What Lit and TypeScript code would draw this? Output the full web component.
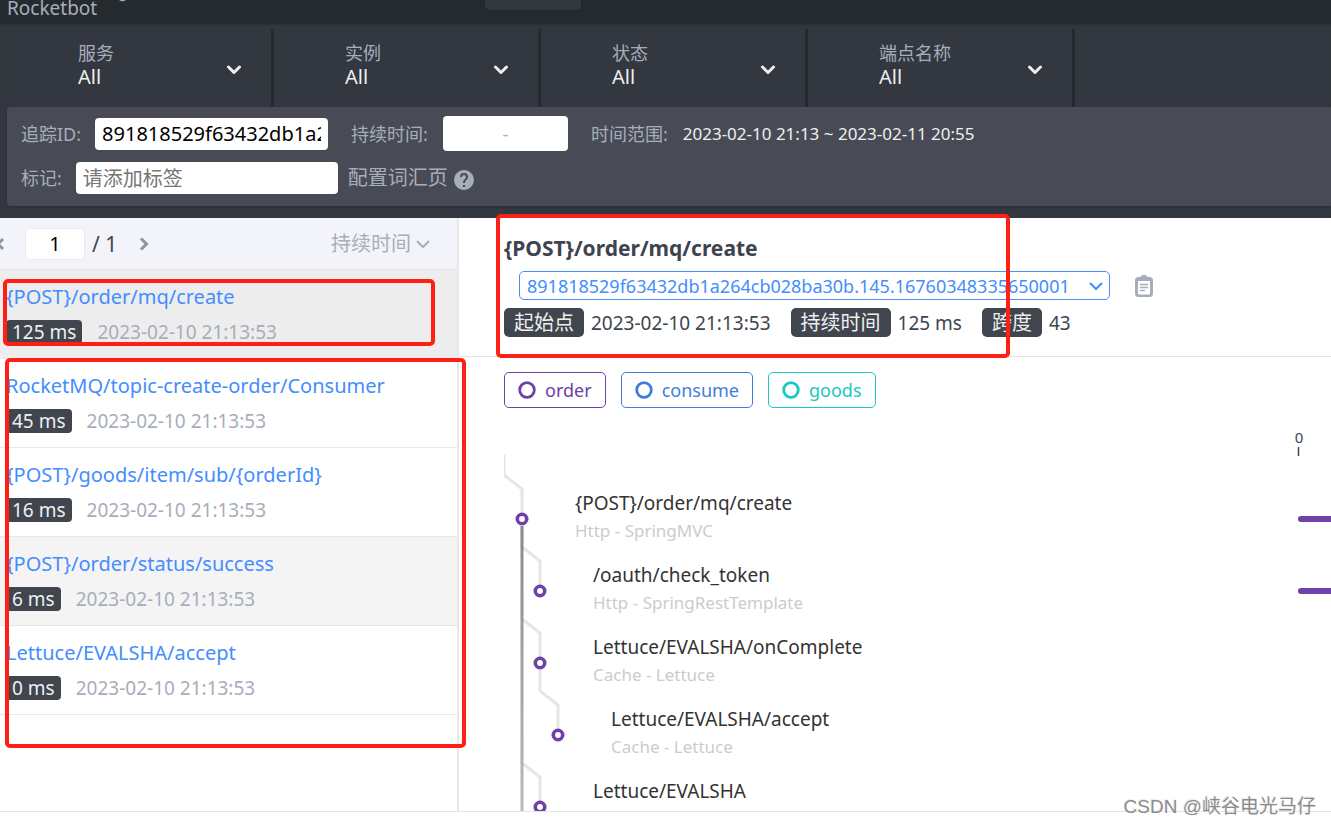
import { LitElement, html, svg, css, nothing } from "lit";
import { customElement, state } from "lit/decorators.js";
import { classMap } from "lit/directives/class-map.js";

interface TraceItem {
  name: string;
  duration: string;
  tone: "" | "selected" | "hovered";
}

interface Span {
  label: string;
  layer: string;
  depth: number;
  bar: boolean;
}

const STARTED = "2023-02-10 21:13:53";
const TRACE_ID = "891818529f63432db1a264cb028ba30b.145.16760348335650001";

const FILTERS = ["服务", "实例", "状态", "端点名称"];

const TRACES: TraceItem[] = [
  { name: "{POST}/order/mq/create", duration: "125 ms", tone: "selected" },
  { name: "RocketMQ/topic-create-order/Consumer", duration: "45 ms", tone: "" },
  { name: "{POST}/goods/item/sub/{orderId}", duration: "16 ms", tone: "" },
  { name: "{POST}/order/status/success", duration: "6 ms", tone: "hovered" },
  { name: "Lettuce/EVALSHA/accept", duration: "0 ms", tone: "" },
];

const SERVICES = [
  { name: "order", color: "#6e40aa" },
  { name: "consume", color: "#417de0" },
  { name: "goods", color: "#1ac7c2" },
];

const SPANS: Span[] = [
  { label: "{POST}/order/mq/create", layer: "Http - SpringMVC", depth: 0, bar: true },
  { label: "/oauth/check_token", layer: "Http - SpringRestTemplate", depth: 1, bar: true },
  { label: "Lettuce/EVALSHA/onComplete", layer: "Cache - Lettuce", depth: 1, bar: false },
  { label: "Lettuce/EVALSHA/accept", layer: "Cache - Lettuce", depth: 2, bar: false },
  { label: "Lettuce/EVALSHA", layer: "Cache - Lettuce", depth: 1, bar: false },
];

const BASE = css`
  :host {
    font-family: "Noto Sans", "Noto Sans CJK SC", sans-serif;
    font-size: 19px;
    line-height: 24px;
  }
  *,
  *::before,
  *::after {
    box-sizing: border-box;
  }
  input,
  select,
  button {
    font: inherit;
    color: inherit;
    margin: 0;
    padding: 0;
    border: 0;
    background: none;
    outline: none;
  }
  select {
    appearance: none;
    cursor: pointer;
  }
  svg {
    display: block;
    flex: none;
  }
`;

const chevronDown = () => html`
  <svg width="16" height="10" viewBox="0 0 16 10" fill="none" stroke="currentColor"
    stroke-width="2" aria-hidden="true">
    <path d="M2 2 L8 8 L14 2" />
  </svg>
`;

@customElement("trace-filters")
export class TraceFilters extends LitElement {
  static styles = [
    BASE,
    css`
      :host {
        display: block;
        padding: 5px 0 12px 7px;
        background: #333840;
        box-shadow: inset 0 2px 2px -1px #2b3036;
      }
      .filters {
        display: flex;
      }
      .filter {
        display: grid;
        grid-template-columns: 1fr 16px;
        align-items: center;
        align-content: start;
        flex: 0 1 267px;
        height: 78px;
        padding: 12px 29px 0 71px;
        border-right: 3px solid #252a2f;
      }
      .name {
        grid-column: 1;
        font-size: 18px;
        color: #a7aebb;
      }
      .value {
        grid-area: 2 / 1 / 3 / 3;
        height: 24px;
        font-size: 20px;
        color: #efefef;
      }
      .arrow {
        grid-area: 1 / 2 / 3 / 3;
        color: #efefef;
        pointer-events: none;
        margin-top: 10px;
      }
      .panel {
        padding: 9px 14px 12px;
        background: #484b55;
        border-radius: 4px 0 0 4px;
        box-shadow: 0 1px 3px #2a2e34;
        color: #a7aebb;
      }
      .row {
        display: flex;
        align-items: center;
        font-size: 18px;
      }
      .row + .row {
        margin-top: 11px;
      }
      .row label {
        margin-right: 14px;
      }
      .caption {
        margin-right: 15px;
      }
      .box {
        height: 32px;
        padding: 0 7px;
        border-radius: 4px;
        background: #fff;
        color: #000;
        font-size: 20px;
      }
      .trace {
        width: 233px;
        margin-right: 23px;
      }
      .tag {
        width: 262px;
        margin-right: 10px;
      }
      .tag::placeholder {
        color: #757575;
        opacity: 1;
      }
      .range {
        display: flex;
        align-items: center;
        width: 125px;
        height: 35px;
        margin-right: 23px;
        border-radius: 4px;
        background: #fff;
        color: #a7aebb;
      }
      .range input {
        flex: 1;
        min-width: 0;
        height: 32px;
        text-align: center;
        color: #000;
      }
      .period {
        font-size: 17px;
        color: #efefef;
      }
      .vocab {
        font-size: 20px;
        color: #a7aebb;
        text-decoration: none;
        margin-right: 5px;
      }
      .help {
        margin-top: 4px;
      }
    `,
  ];

  render() {
    return html`
      <div class="filters">
        ${FILTERS.map(
          (name, i) => html`
            <div class="filter">
              <label class="name" for="filter-${i}">${name}</label>
              <select class="value" id="filter-${i}"><option>All</option></select>
              <svg class="arrow" width="16" height="10" viewBox="0 0 16 10" fill="none" stroke="currentColor"
                stroke-width="3" stroke-linecap="round" stroke-linejoin="round" aria-hidden="true">
                <path d="M2.500 2 L8 7.500 L13.500 2" />
              </svg>
            </div>
          `
        )}
      </div>
      <div class="panel">
        <div class="row">
          <label for="trace">追踪ID:</label>
          <input class="box trace" id="trace" .value=${TRACE_ID} />
          <span class="caption">持续时间:</span>
          <div class="range">
            <input aria-label="最小持续时间" /><span>-</span><input aria-label="最大持续时间" />
          </div>
          <span class="caption">时间范围:</span>
          <span class="period">2023-02-10 21:13 ~ 2023-02-11 20:55</span>
        </div>
        <div class="row">
          <label for="tag">标记:</label>
          <input class="box tag" id="tag" placeholder="请添加标签" />
          <a class="vocab" href="#vocabulary">配置词汇页</a>
          <svg class="help" width="22" height="22" viewBox="0 0 24 24" fill="#a7aebb" aria-hidden="true">
            <path
              d="M12 1.2C6.04 1.2 1.2 6.04 1.2 12S6.04 22.8 12 22.8 22.8 17.96 22.8 12 17.96 1.2 12 1.2zm1.1 18.4h-2.2v-2.2h2.2v2.2zm2.3-8.4l-1 1c-.8.8-1.3 1.5-1.3 3.2h-2.2v-.6c0-1.2.5-2.3 1.3-3.1l1.3-1.4c.4-.4.7-.9.7-1.5a2.2 2.2 0 0 0-4.4 0H7.6a4.4 4.4 0 0 1 8.8 0c0 .9-.4 1.8-1 2.4z"
            />
          </svg>
        </div>
      </div>
    `;
  }
}

@customElement("trace-list")
export class TraceList extends LitElement {
  static styles = [
    BASE,
    css`
      :host {
        display: block;
        border-right: 2px solid #e8e8ea;
        background: #fff;
      }
      .pager {
        display: flex;
        align-items: center;
        height: 52px;
        padding-right: 26px;
        border-bottom: 1px solid #e3e5ea;
        background: #f2f4fa;
        color: #3d444f;
      }
      .step {
        display: flex;
        color: #8e939c;
        cursor: pointer;
      }
      .prev {
        margin: 0 19px 0 -8px;
      }
      .page {
        width: 60px;
        height: 32px;
        margin-right: 7px;
        border: 1px solid #e8e9ee;
        border-radius: 5px;
        background: #fff;
        color: #000;
        text-align: center;
        font-size: 20px;
      }
      .total {
        flex: 1;
        display: flex;
        align-items: center;
        gap: 20px;
        font-size: 21px;
      }
      .sort {
        display: grid;
        grid-template-columns: 84px 16px;
        align-items: center;
        color: #a7aebb;
      }
      .sort select {
        grid-area: 1 / 1 / 2 / 3;
        font-size: 20px;
        height: 30px;
      }
      .sort svg {
        grid-area: 1 / 2;
        pointer-events: none;
      }
      .items {
        list-style: none;
        margin: 0;
        padding: 0;
      }
      .item {
        display: flex;
        flex-direction: column;
        gap: 11px;
        height: 89px;
        padding: 15px 6px 0;
        border-bottom: 1px solid #e8e8e8;
      }
      .selected {
        background: #ededed;
      }
      .hovered {
        background: #f4f4f4;
      }
      .name {
        font-size: 20px;
        color: #448dfe;
        text-decoration: none;
        white-space: nowrap;
      }
      .meta {
        display: flex;
        gap: 15px;
        color: #a7aebb;
      }
      .tag {
        padding: 0 6px;
        border-radius: 4px;
        background: #40454e;
        color: #efefef;
      }
    `,
  ];

  render() {
    return html`
      <div class="pager">
        <button class="step prev" aria-label="上一页">
          <svg width="14" height="16" viewBox="0 0 14 16" fill="none" stroke="currentColor" stroke-width="3">
            <path d="M11 3 L6 8 L11 13" />
          </svg>
        </button>
        <input class="page" aria-label="页码" value="1" />
        <div class="total">
          <span>/ 1</span>
          <button class="step" aria-label="下一页">
            <svg width="14" height="16" viewBox="0 0 14 16" fill="none" stroke="currentColor" stroke-width="3">
              <path d="M4 2.500 L9.500 8 L4 13.500" />
            </svg>
          </button>
        </div>
        <div class="sort">
          <select aria-label="排序"><option>持续时间</option></select>
          ${chevronDown()}
        </div>
      </div>
      <ul class="items">
        ${TRACES.map(
          (t) => html`
            <li class=${classMap({ item: true, selected: t.tone === "selected", hovered: t.tone === "hovered" })}>
              <a class="name" href="#trace">${t.name}</a>
              <div class="meta"><span class="tag">${t.duration}</span><time>${STARTED}</time></div>
            </li>
          `
        )}
      </ul>
    `;
  }
}

@customElement("trace-detail")
export class TraceDetail extends LitElement {
  static styles = [
    BASE,
    css`
      :host {
        display: flex;
        flex-direction: column;
        min-width: 0;
        overflow: hidden;
        background: #fff;
        color: #3d444f;
      }
      .head {
        padding: 17px 45px 19px;
        border-bottom: 1px solid #e5e5e5;
      }
      .title {
        margin: 0 0 9px;
        font-size: 21px;
        line-height: 27px;
        font-weight: 700;
      }
      .ids {
        display: flex;
        align-items: center;
        gap: 24px;
        padding-left: 15px;
        margin-bottom: 8px;
      }
      .pick {
        display: grid;
        grid-template-columns: 569px 22px;
        align-items: center;
        color: #448dfe;
      }
      .pick select {
        grid-area: 1 / 1 / 2 / 3;
        height: 29px;
        padding-left: 7px;
        border: 1px solid #448dfe;
        border-radius: 5px;
        font-size: 18px;
      }
      .pick svg {
        grid-area: 1 / 2;
        pointer-events: none;
      }
      .copy {
        display: flex;
        color: #a7aebb;
        cursor: pointer;
      }
      .facts {
        display: flex;
        align-items: center;
        flex-wrap: wrap;
        margin: 0;
      }
      .facts dt {
        padding: 0 10px;
        border-radius: 5px;
        background: #40454e;
        color: #efefef;
        font-size: 20px;
        line-height: 29px;
      }
      .facts dd {
        margin: 0 20px 0 7px;
      }
      .services {
        display: flex;
        gap: 15px;
        padding: 15px 45px 0;
      }
      .service {
        display: flex;
        align-items: center;
        gap: 9px;
        height: 36px;
        padding: 0 13px;
        border: 1px solid currentColor;
        border-radius: 5px;
        font-size: 18px;
      }
      .tree {
        flex: 1 0 380px;
        width: calc(100% - 45px);
        margin-left: 45px;
        overflow: hidden;
      }
      .tick {
        font-size: 15px;
        fill: #3d444f;
        text-anchor: middle;
      }
      .label {
        font-size: 19px;
        fill: #333;
      }
      .layer {
        font-size: 17px;
        fill: #ccc;
      }
    `,
  ];

  private drawSpan(span: Span, index: number) {
    const x = 18 + span.depth * 18;
    const y = 111 + index * 72;
    return svg`
      <path d="M${x - 18} ${y - 65} V${y - 44} L${x} ${y - 30} V${y - 6}" fill="none"
        stroke="#000" stroke-opacity="0.1" stroke-width="3" />
      <circle cx=${x} cy=${y} r="4.700" fill="#fff" stroke="#6e40aa" stroke-width="3.600" />
      <text class="label" x=${x + 53} y=${y - 9}>${span.label}</text>
      <text class="layer" x=${x + 53} y=${y + 18}>${span.layer}</text>
      ${span.bar ? svg`<rect x="794" y=${y - 3} width="900" height="6" rx="3" fill="#6e40aa" />` : nothing}
    `;
  }

  render() {
    return html`
      <div class="head">
        <h5 class="title">{POST}/order/mq/create</h5>
        <div class="ids">
          <div class="pick">
            <select aria-label="追踪ID"><option>${TRACE_ID}</option></select>
            ${chevronDown()}
          </div>
          <button class="copy" aria-label="复制">
            <svg width="20" height="24" viewBox="0 0 20 24" aria-hidden="true">
              <path
                fill="currentColor"
                fill-rule="evenodd"
                d="M4.5 3h2a3.8 3.8 0 0 1 7 0h2A3.5 3.5 0 0 1 19 6.5v13a3.5 3.5 0 0 1-3.5 3.5h-11A3.5 3.5 0 0 1 1 19.5v-13A3.5 3.5 0 0 1 4.5 3zM4 7v12a1.5 1.5 0 0 0 1.5 1.5h9A1.5 1.5 0 0 0 16 19V7z"
              />
              <path d="M6 10.500h8M6 13.500h8M6 16.500h5" stroke="currentColor" stroke-width="1.500" />
            </svg>
          </button>
        </div>
        <dl class="facts">
          <dt>起始点</dt>
          <dd>${STARTED}</dd>
          <dt>持续时间</dt>
          <dd>125 ms</dd>
          <dt>跨度</dt>
          <dd>43</dd>
        </dl>
      </div>
      <div class="services">
        ${SERVICES.map(
          (s) => html`
            <span class="service" style="color:${s.color}">
              <svg width="18" height="18" viewBox="0 0 18 18" aria-hidden="true">
                <circle cx="9" cy="9" r="7.300" fill="none" stroke="currentColor" stroke-width="2.800" />
              </svg>
              ${s.name}
            </span>
          `
        )}
      </div>
      <svg class="tree" role="img" aria-label="调用链">
        <defs>
          <linearGradient id="trunk" gradientUnits="userSpaceOnUse" x1="0" y1="118" x2="0" y2="403">
            <stop offset="0" stop-color="#8a8a8a" />
            <stop offset="1" stop-color="#bababa" />
          </linearGradient>
        </defs>
        <text class="tick" x="795" y="35">0</text>
        <path d="M794.500 39v9" stroke="#3d444f" stroke-width="1.500" />
        ${SPANS.map((s, i) => this.drawSpan(s, i))}
        <rect x="16.500" y="118" width="3" height="400" fill="url(#trunk)" />
      </svg>
    `;
  }
}

@customElement("app-root")
export class AppRoot extends LitElement {
  @state() private brand = "Rocketbot";

  static styles = [
    BASE,
    css`
      :host {
        position: relative;
        display: flex;
        flex-direction: column;
        height: 100vh;
        overflow: hidden;
        background: #fff;
      }
      .top {
        display: grid;
        grid-template-columns: 112px 366px 96px;
        flex: none;
        height: 24px;
        padding-left: 7px;
        background: #252a2f;
        color: #a7aebb;
      }
      .brand {
        line-height: 16px;
      }
      .tab {
        height: 10px;
        border-radius: 0 0 5px 5px;
        background: #333840;
      }
      .body {
        flex: 1;
        display: grid;
        grid-template-columns: 459px minmax(0, 1fr);
        min-height: 0;
        overflow: hidden;
      }
      .foot {
        flex: none;
        height: 15px;
        border-top: 1px solid #e5e5e5;
      }
      .mark {
        position: absolute;
        border: 4px solid #ff2015;
        border-radius: 5px;
        pointer-events: none;
      }
      .mark-first {
        left: 3px;
        top: 279px;
        width: 432px;
        height: 67px;
      }
      .mark-rest {
        left: 5px;
        top: 358px;
        width: 461px;
        height: 390px;
      }
      .mark-head {
        left: 496px;
        top: 214px;
        width: 514px;
        height: 144px;
      }
      .credit {
        position: absolute;
        right: 15px;
        bottom: 7px;
        font-family: "Liberation Sans", "Noto Sans CJK SC", sans-serif;
        font-size: 19px;
        color: #8c8c8c;
        text-shadow: -1px -1px 0 #eee;
      }
    `,
  ];

  render() {
    return html`
      <header class="top">
        <span class="brand">${this.brand}</span>
        <svg width="8" height="2" viewBox="0 0 8 2" aria-hidden="true">
          <path d="M0 0 Q3.500 2.500 7 0z" fill="#a7aebb" />
        </svg>
        <span class="tab"></span>
      </header>
      <trace-filters></trace-filters>
      <main class="body">
        <trace-list></trace-list>
        <trace-detail></trace-detail>
      </main>
      <footer class="foot"></footer>
      <div class="mark mark-first"></div>
      <div class="mark mark-rest"></div>
      <div class="mark mark-head"></div>
      <span class="credit">CSDN @峡谷电光马仔</span>
    `;
  }
}
